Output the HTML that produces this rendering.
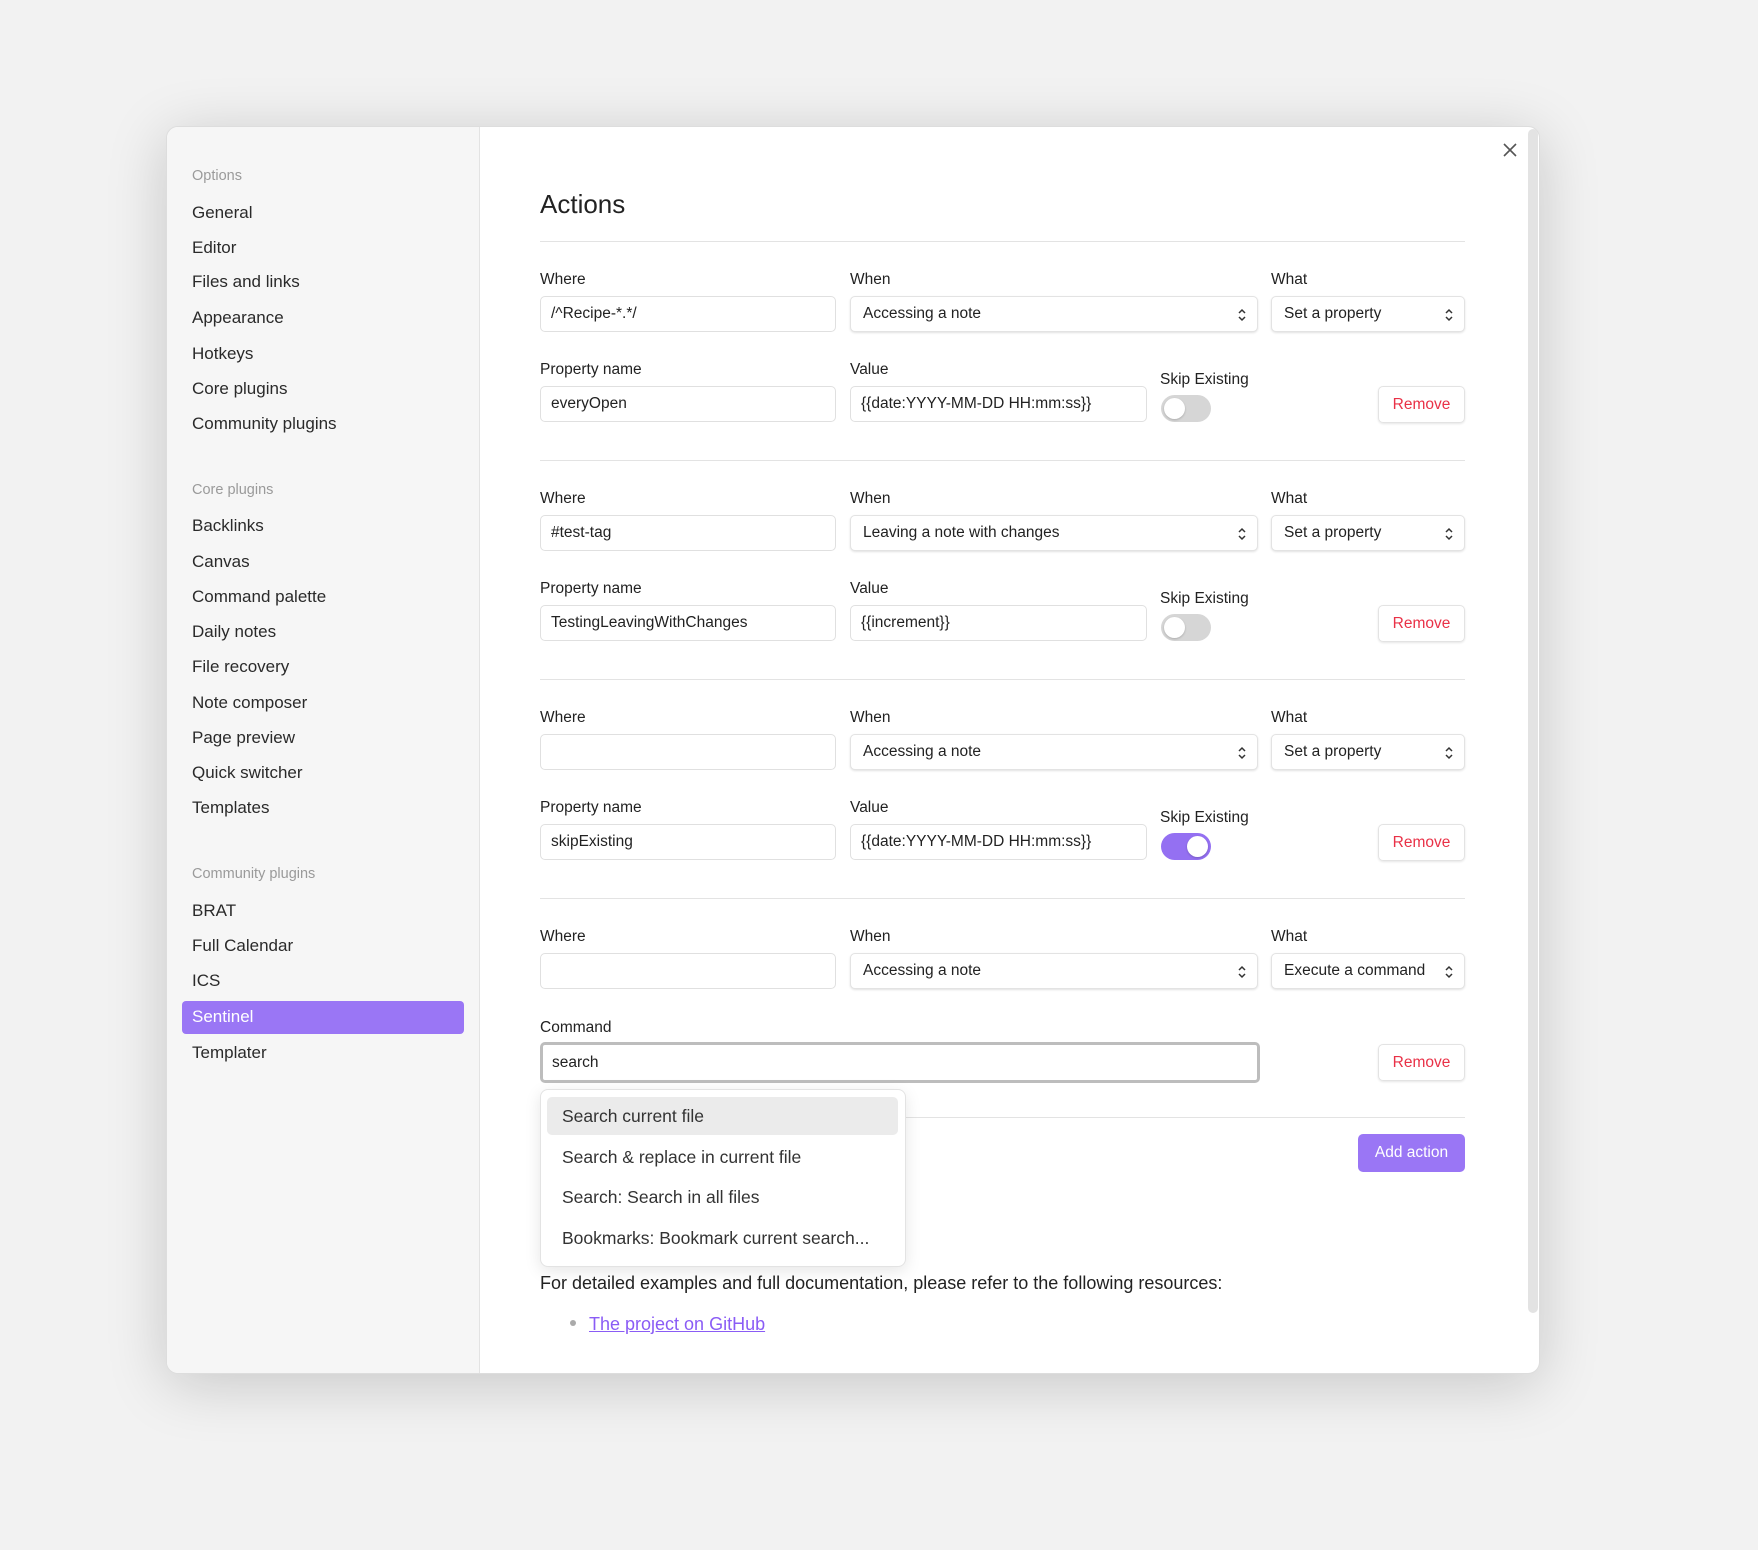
<!DOCTYPE html>
<html><head><meta charset="utf-8"><style>
*{box-sizing:border-box;margin:0;padding:0}
body{width:1758px;height:1550px;background:#f2f2f2;font-family:"Liberation Sans",sans-serif;color:#222;position:relative;overflow:hidden}
.modal{position:absolute;left:166px;top:126px;width:1374px;height:1248px;background:#fff;border-radius:12px;box-shadow:0 10px 60px rgba(0,0,0,.18);overflow:hidden;border:1px solid #ddd}
.side{position:absolute;left:0;top:0;width:313px;height:100%;background:#f6f6f6;border-right:1px solid #e3e3e3}
.a{position:absolute;white-space:nowrap}
.si{position:absolute;left:25px;font-size:17px;color:#2a2a2a;line-height:22px}
.sh{position:absolute;left:25px;font-size:14.5px;color:#9a9a9a;line-height:20px}
.lbl{position:absolute;font-size:15.5px;color:#222;line-height:20px}
.inp{position:absolute;height:36px;border:1px solid #e0e0e0;border-radius:5px;font-size:15.5px;line-height:34px;padding-left:10px;color:#222;background:#fff}
.sel{position:absolute;height:36px;border:1px solid #e3e3e3;border-radius:5px;font-size:15.5px;line-height:34px;padding-left:12px;background:#fff;box-shadow:0 1px 2px rgba(0,0,0,.12)}
.sel svg{position:absolute;right:10px;top:11px}
.tog{position:absolute;width:50px;height:27px;border-radius:14px;background:#d6d6d6}
.tog i{position:absolute;left:3px;top:3px;width:21px;height:21px;border-radius:50%;background:#fff;box-shadow:0 1px 2px rgba(0,0,0,.2)}
.tog.on{background:#9470f2}.tog.on i{left:26px}
.rm{position:absolute;width:87px;height:37px;border:1px solid #e3e3e3;border-radius:5px;color:#e93147;font-size:15.5px;text-align:center;line-height:35px;box-shadow:0 1px 2px rgba(0,0,0,.1)}
.hr{position:absolute;left:373px;width:925px;height:1px;background:#e3e3e3}
</style></head><body>
<div class="modal">
<div class="side">
<div class="sh" style="top:39px">Options</div>
<div class="si" style="top:75px">General</div>
<div class="si" style="top:110px">Editor</div>
<div class="si" style="top:144px">Files and links</div>
<div class="si" style="top:180px">Appearance</div>
<div class="si" style="top:216px">Hotkeys</div>
<div class="si" style="top:251px">Core plugins</div>
<div class="si" style="top:286px">Community plugins</div>
<div class="sh" style="top:353px">Core plugins</div>
<div class="si" style="top:388px">Backlinks</div>
<div class="si" style="top:424px">Canvas</div>
<div class="si" style="top:459px">Command palette</div>
<div class="si" style="top:494px">Daily notes</div>
<div class="si" style="top:529px">File recovery</div>
<div class="si" style="top:565px">Note composer</div>
<div class="si" style="top:600px">Page preview</div>
<div class="si" style="top:635px">Quick switcher</div>
<div class="si" style="top:670px">Templates</div>
<div class="sh" style="top:737px">Community plugins</div>
<div class="si" style="top:773px">BRAT</div>
<div class="si" style="top:808px">Full Calendar</div>
<div class="si" style="top:843px">ICS</div>
<div style="position:absolute;left:15px;top:874px;width:282px;height:33px;background:#9a76f5;border-radius:4px"></div>
<div class="si" style="top:879px;color:#fff">Sentinel</div>
<div class="si" style="top:915px">Templater</div>
</div>
<svg class="a" style="left:1336px;top:16px" width="14" height="14" viewBox="0 0 14 14"><path d="M1 1L13 13M13 1L1 13" stroke="#555" stroke-width="1.6"/></svg>
<div class="a" style="left:1361px;top:2px;width:10px;height:1184px;background:#e3e3e3;border-radius:5px"></div>
<div class="a" style="left:373px;top:61px;font-size:26px;line-height:32px;color:#222">Actions</div>
<div class="hr" style="top:114px"></div>
<div id="blocks"></div>
<!-- block template offsets relative to B -->
<div style="position:absolute;left:0;top:114px;width:100%">
<div class="lbl" style="left:373px;top:29px">Where</div><div class="lbl" style="left:683px;top:29px">When</div><div class="lbl" style="left:1104px;top:29px">What</div>
<div class="inp" style="left:373px;top:55px;width:296px">/^Recipe-*.*/</div>
<div class="sel" style="left:683px;top:55px;width:408px">Accessing a note<svg width="10" height="14" viewBox="0 0 10 14"><path d="M2 5L5 2L8 5M2 9L5 12L8 9" fill="none" stroke="#333" stroke-width="1.5"/></svg></div>
<div class="sel" style="left:1104px;top:55px;width:194px">Set a property<svg width="10" height="14" viewBox="0 0 10 14"><path d="M2 5L5 2L8 5M2 9L5 12L8 9" fill="none" stroke="#333" stroke-width="1.5"/></svg></div>
<div class="lbl" style="left:373px;top:119px">Property name</div><div class="lbl" style="left:683px;top:119px">Value</div><div class="lbl" style="left:993px;top:129px">Skip Existing</div>
<div class="inp" style="left:373px;top:145px;width:296px">everyOpen</div>
<div class="inp" style="left:683px;top:145px;width:297px">{{date:YYYY-MM-DD HH:mm:ss}}</div>
<div class="tog" style="left:994px;top:154px"><i></i></div>
<div class="rm" style="left:1211px;top:145px">Remove</div>
<div class="hr" style="top:219px"></div>
</div>
<div style="position:absolute;left:0;top:333px;width:100%">
<div class="lbl" style="left:373px;top:29px">Where</div><div class="lbl" style="left:683px;top:29px">When</div><div class="lbl" style="left:1104px;top:29px">What</div>
<div class="inp" style="left:373px;top:55px;width:296px">#test-tag</div>
<div class="sel" style="left:683px;top:55px;width:408px">Leaving a note with changes<svg width="10" height="14" viewBox="0 0 10 14"><path d="M2 5L5 2L8 5M2 9L5 12L8 9" fill="none" stroke="#333" stroke-width="1.5"/></svg></div>
<div class="sel" style="left:1104px;top:55px;width:194px">Set a property<svg width="10" height="14" viewBox="0 0 10 14"><path d="M2 5L5 2L8 5M2 9L5 12L8 9" fill="none" stroke="#333" stroke-width="1.5"/></svg></div>
<div class="lbl" style="left:373px;top:119px">Property name</div><div class="lbl" style="left:683px;top:119px">Value</div><div class="lbl" style="left:993px;top:129px">Skip Existing</div>
<div class="inp" style="left:373px;top:145px;width:296px">TestingLeavingWithChanges</div>
<div class="inp" style="left:683px;top:145px;width:297px">{{increment}}</div>
<div class="tog" style="left:994px;top:154px"><i></i></div>
<div class="rm" style="left:1211px;top:145px">Remove</div>
<div class="hr" style="top:219px"></div>
</div>
<div style="position:absolute;left:0;top:552px;width:100%">
<div class="lbl" style="left:373px;top:29px">Where</div><div class="lbl" style="left:683px;top:29px">When</div><div class="lbl" style="left:1104px;top:29px">What</div>
<div class="inp" style="left:373px;top:55px;width:296px"></div>
<div class="sel" style="left:683px;top:55px;width:408px">Accessing a note<svg width="10" height="14" viewBox="0 0 10 14"><path d="M2 5L5 2L8 5M2 9L5 12L8 9" fill="none" stroke="#333" stroke-width="1.5"/></svg></div>
<div class="sel" style="left:1104px;top:55px;width:194px">Set a property<svg width="10" height="14" viewBox="0 0 10 14"><path d="M2 5L5 2L8 5M2 9L5 12L8 9" fill="none" stroke="#333" stroke-width="1.5"/></svg></div>
<div class="lbl" style="left:373px;top:119px">Property name</div><div class="lbl" style="left:683px;top:119px">Value</div><div class="lbl" style="left:993px;top:129px">Skip Existing</div>
<div class="inp" style="left:373px;top:145px;width:296px">skipExisting</div>
<div class="inp" style="left:683px;top:145px;width:297px">{{date:YYYY-MM-DD HH:mm:ss}}</div>
<div class="tog on" style="left:994px;top:154px"><i></i></div>
<div class="rm" style="left:1211px;top:145px">Remove</div>
<div class="hr" style="top:219px"></div>
</div>
<div style="position:absolute;left:0;top:771px;width:100%">
<div class="lbl" style="left:373px;top:29px">Where</div><div class="lbl" style="left:683px;top:29px">When</div><div class="lbl" style="left:1104px;top:29px">What</div>
<div class="inp" style="left:373px;top:55px;width:296px"></div>
<div class="sel" style="left:683px;top:55px;width:408px">Accessing a note<svg width="10" height="14" viewBox="0 0 10 14"><path d="M2 5L5 2L8 5M2 9L5 12L8 9" fill="none" stroke="#333" stroke-width="1.5"/></svg></div>
<div class="sel" style="left:1104px;top:55px;width:194px">Execute a command<svg width="10" height="14" viewBox="0 0 10 14"><path d="M2 5L5 2L8 5M2 9L5 12L8 9" fill="none" stroke="#333" stroke-width="1.5"/></svg></div>
<div class="lbl" style="left:373px;top:120px">Command</div>
<div class="inp" style="left:373px;top:144px;width:720px;height:41px;border:3px solid #bdbdbd;line-height:35px;padding-left:9px">search</div>
<div class="rm" style="left:1211px;top:146px">Remove</div>
<div class="hr" style="top:219px"></div>
</div>
<div class="a" style="left:1191px;top:1007px;width:107px;height:38px;background:#9a76f5;border-radius:5px;color:#fff;font-size:15.5px;text-align:center;line-height:38px">Add action</div>
<div class="a" style="left:373px;top:962px;width:366px;height:178px;background:#fff;border:1px solid #e3e3e3;border-radius:8px;box-shadow:0 4px 16px rgba(0,0,0,.1)">
<div class="a" style="left:6px;top:7px;width:351px;height:38px;background:#ebebeb;border-radius:5px"></div>
<div class="a" style="left:21px;top:14px;font-size:17.5px;color:#333;line-height:24px">Search current file</div>
<div class="a" style="left:21px;top:55px;font-size:17.5px;color:#333;line-height:24px">Search &amp; replace in current file</div>
<div class="a" style="left:21px;top:95px;font-size:17.5px;color:#333;line-height:24px">Search: Search in all files</div>
<div class="a" style="left:21px;top:136px;font-size:17.5px;color:#333;line-height:24px">Bookmarks: Bookmark current search...</div>
</div>
<div class="a" style="left:373px;top:1144px;font-size:18px;color:#222;line-height:24px">For detailed examples and full documentation, please refer to the following resources:</div>
<div class="a" style="left:403px;top:1193px;width:6px;height:6px;border-radius:50%;background:#aaa"></div>
<div class="a" style="left:422px;top:1185px;font-size:18px;color:#8a5cf5;text-decoration:underline;line-height:24px">The project on GitHub</div>
</div>
</body></html>
